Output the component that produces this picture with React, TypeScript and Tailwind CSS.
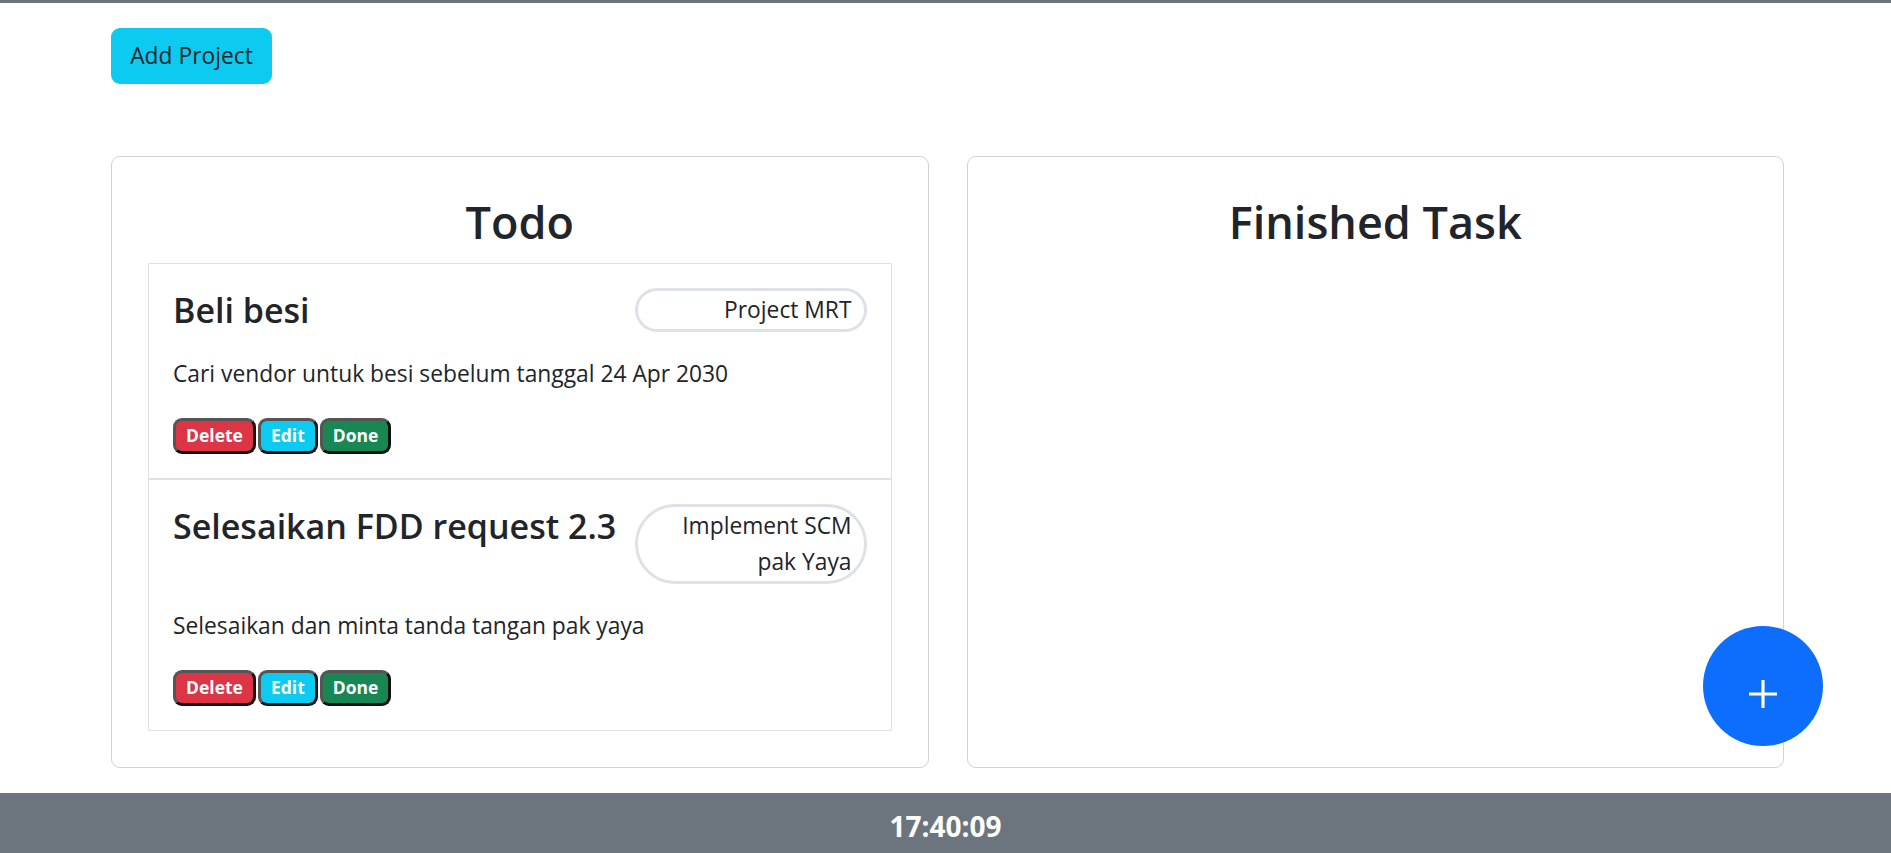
import React from "react";

type Task = {
  id: number;
  title: string;
  project: string;
  description: string;
};

const tasks: Task[] = [
  {
    id: 1,
    title: "Beli besi",
    project: "Project MRT",
    description: "Cari vendor untuk besi sebelum tanggal 24 Apr 2030",
  },
  {
    id: 2,
    title: "Selesaikan FDD request 2.3",
    project: "Implement SCM pak Yaya",
    description: "Selesaikan dan minta tanda tangan pak yaya",
  },
];

const badgeBtn =
  "h-[36px] px-[10px] rounded-[9px] border-[3px] border-t-[#555] border-l-[#555] border-b-[#111] border-r-[#111] text-white text-[17.5px] font-bold leading-none";

const TaskItem = ({ task, last }: { task: Task; last: boolean }) => {
  return (
    <div className={`p-[24px] ${last ? "" : "border-b-2 border-[#dee2e6]"}`}>
      <div className="grid grid-cols-3 items-start">
        <h4 className="col-span-2 text-[34px] leading-[44px] font-semibold text-[#212529]">
          {task.title}
        </h4>
        <div className="rounded-full border-[3px] border-[#dee2e6] px-[12px] py-[1px] text-right leading-[36px]">
          {task.project}
        </div>
      </div>
      <p className="mt-[24px] leading-[36px]">{task.description}</p>
      <div className="mt-[26px] flex gap-[2px]">
        <button className={`${badgeBtn} bg-[#dc3545]`}>Delete</button>
        <button className={`${badgeBtn} bg-[#0dcaf0]`}>Edit</button>
        <button className={`${badgeBtn} bg-[#198754]`}>Done</button>
      </div>
    </div>
  );
};

export default function App() {
  return (
    <div
      className="h-screen flex flex-col text-[22.8px] text-[#212529] bg-white"
      style={{ fontFamily: '"Open Sans", "Noto Sans", sans-serif' }}
    >
      <div className="h-[3px] bg-[#6c757d]" />

      <div className="ml-[111px] w-[1673px]">
        <button className="mt-[25px] w-[161px] h-[56px] rounded-[9px] bg-[#0dcaf0] text-[22.8px] text-[#212529]">
          Add Project
        </button>

        <div className="mt-[72px] grid grid-cols-2 gap-[38px]">
          <div className="border border-[#d2d2d2] rounded-[9px] p-[36px]">
            <h2 className="text-center text-[45px] font-semibold leading-[58px] mb-[12px]">
              Todo
            </h2>
            <div className="border border-[#dee2e6]">
              {tasks.map((t, i) => (
                <TaskItem key={t.id} task={t} last={i === tasks.length - 1} />
              ))}
            </div>
          </div>

          <div className="border border-[#d2d2d2] rounded-[9px] p-[36px]">
            <h2 className="text-center text-[45px] font-semibold leading-[58px] mb-[12px]">
              Finished Task
            </h2>
          </div>
        </div>
      </div>

      <button className="fixed right-[68px] bottom-[107px] w-[120px] h-[120px] rounded-full bg-[#0d6efd] flex items-center justify-center pt-[16px]">
        <svg width="30" height="30" viewBox="0 0 30 30">
          <path d="M15 1V29M1 15H29" stroke="white" strokeWidth="3.2" />
        </svg>
      </button>

      <footer className="mt-auto h-[60px] bg-[#6c757d] flex items-center justify-center pt-[6px]">
        <h5 className="text-white text-[28px] font-bold">17:40:09</h5>
      </footer>
    </div>
  );
}
